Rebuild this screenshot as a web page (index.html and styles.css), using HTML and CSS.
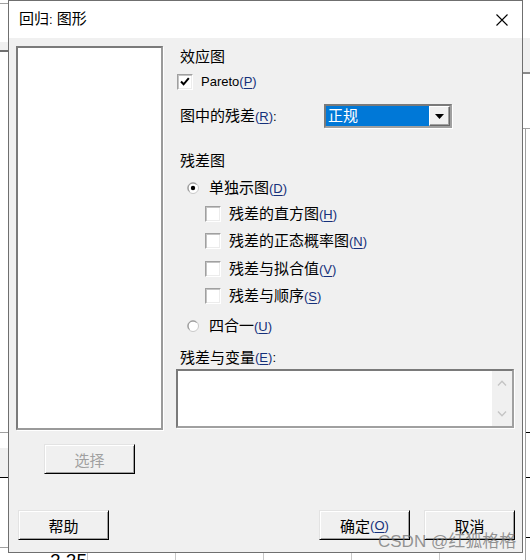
FILE: index.html
```html
<!DOCTYPE html>
<html lang="zh-CN">
<head>
<meta charset="utf-8">
<title>回归: 图形</title>
<link rel="stylesheet" href="styles.css">
</head>
<body>
<div class="backdrop">
  <div class="bl bl-1"></div>
  <div class="bl bl-band1"></div>
  <div class="bl bl-2"></div>
  <div class="bl bl-3"></div>
  <div class="bl bl-band2"></div>
  <div class="bl bl-4"></div>
  <div class="bl bl-5"></div>
  <div class="br br-band1"></div>
  <div class="br br-1"></div>
  <div class="br br-2"></div>
  <div class="br br-v"></div>
  <div class="br br-3"></div>
  <div class="br br-4"></div>
  <div class="br br-5"></div>
  <div class="bv bv-1"></div>
  <div class="bv bv-2"></div>
  <div class="bv bv-3"></div>
  <div class="bv bv-4"></div>
  <div class="bv bv-5"></div>
  <div class="cellnum">2.25</div>
</div>

<div class="dialog">
  <div class="titlebar">
    <span class="title">回归<span class="lat">:</span> 图形</span>
    <svg class="close" width="12" height="12" viewBox="0 0 12 12"><path d="M0.5 0.5 L11.5 11.5 M11.5 0.5 L0.5 11.5" stroke="#000" stroke-width="1.1" fill="none"/></svg>
  </div>
  <div class="client">
    <div class="main">
      <div class="leftcol">
        <div class="listbox"></div>
        <button class="btn btn-select" disabled>选择</button>
      </div>
      <div class="rightcol">
        <div class="row r-effect">效应图</div>
        <div class="row r-pareto">
          <span class="cb"><svg width="14" height="14" viewBox="0 0 14 14"><path d="M3 6.5 L5.6 9.3 L10.8 3.2" stroke="#000" stroke-width="2" fill="none"/></svg></span>
          <span class="lat">Pareto<span class="key">(<u>P</u>)</span></span>
        </div>
        <div class="row r-resid">
          <span class="resid-label">图中的残差<span class="key">(<u>R</u>)</span><span class="lat">:</span></span>
          <div class="combo">
            <div class="combo-val">正规</div>
            <div class="combo-btn"><svg width="9" height="5" viewBox="0 0 9 5"><path d="M0 0 H9 L4.5 5 Z" fill="#000"/></svg></div>
          </div>
        </div>
        <div class="row r-plots">残差图</div>
        <div class="row opt r-single">
          <span class="radio"><svg width="12" height="12" viewBox="0 0 12 12"><circle cx="6" cy="6" r="5.5" fill="#fff" stroke="#c8c8c8"/><path d="M2.5 9.5 A4.9 4.9 0 0 1 9.5 2.5" fill="none" stroke="#8a8a8a"/><circle cx="6" cy="6" r="2.2" fill="#000"/></svg></span>
          <span>单独示图<span class="key">(<u>D</u>)</span></span>
        </div>
        <div class="row sub r-s1"><span class="cb"></span><span>残差的直方图<span class="key">(<u>H</u>)</span></span></div>
        <div class="row sub r-s2"><span class="cb"></span><span>残差的正态概率图<span class="key">(<u>N</u>)</span></span></div>
        <div class="row sub r-s3"><span class="cb"></span><span>残差与拟合值<span class="key">(<u>V</u>)</span></span></div>
        <div class="row sub r-s4"><span class="cb"></span><span>残差与顺序<span class="key">(<u>S</u>)</span></span></div>
        <div class="row opt r-four">
          <span class="radio"><svg width="12" height="12" viewBox="0 0 12 12"><circle cx="6" cy="6" r="5.5" fill="#fff" stroke="#c8c8c8"/><path d="M2.5 9.5 A4.9 4.9 0 0 1 9.5 2.5" fill="none" stroke="#8a8a8a"/></svg></span>
          <span>四合一<span class="key">(<u>U</u>)</span></span>
        </div>
        <div class="row r-vars">残差与变量<span class="key">(<u>E</u>)</span><span class="lat">:</span></div>
        <div class="varbox">
          <div class="vscroll">
            <svg width="10" height="6" viewBox="0 0 10 6"><path d="M1 5.5 L5 1.2 L9 5.5" stroke="#c4c4c4" stroke-width="1.3" fill="none"/></svg>
            <svg width="10" height="6" viewBox="0 0 10 6"><path d="M1 0.5 L5 4.8 L9 0.5" stroke="#c4c4c4" stroke-width="1.3" fill="none"/></svg>
          </div>
        </div>
      </div>
    </div>
    <div class="footer">
      <button class="btn">帮助</button>
      <span class="spacer"></span>
      <button class="btn">确定<span class="key">(<u>O</u>)</span></button>
      <button class="btn">取消</button>
    </div>
  </div>
</div>

<div class="watermark">CSDN @红狐格格</div>
</body>
</html>
```

FILE: styles.css
```css
* { box-sizing: border-box; }
html, body { margin: 0; padding: 0; }
body {
  width: 530px;
  height: 560px;
  overflow: hidden;
  position: relative;
  background: #fff;
  color: #000;
  font-family: "Liberation Sans", "Noto Sans CJK SC", sans-serif;
  font-size: 15px;
}

/* ---------- background application (behind the dialog) ---------- */
.backdrop { position: absolute; inset: 0; }
.bl, .br, .bv { position: absolute; }
.bl { left: 0; width: 8px; }
.bl-1 { top: 3px; height: 1px; background: #a0a0a0; }
.bl-band1 { top: 42px; height: 9px; background: #f0f0f0; }
.bl-2 { top: 50px; height: 2px; background: #707070; }
.bl-3 { top: 432px; height: 1px; background: #a0a0a0; }
.bl-band2 { top: 448px; height: 29px; background: #f0f0f0; }
.bl-4 { top: 477px; height: 1px; background: #000; }
.bl-5 { top: 547px; height: 1px; background: #a0a0a0; }
.br { left: 523px; width: 7px; }
.br-band1 { top: 38px; height: 34px; background: #f0f0f0; }
.br-1 { top: 72px; height: 2px; background: #8a8a8a; }
.br-2 { top: 128px; height: 1px; background: #a0a0a0; }
.br-v { left: 525px; width: 1px; top: 129px; height: 431px; background: #a0a0a0; }
.br-3 { left: 526px; width: 4px; top: 432px; height: 1px; background: #000; }
.br-4 { left: 526px; width: 4px; top: 477px; height: 1px; background: #000; }
.br-5 { left: 526px; width: 4px; top: 537px; height: 1px; background: #000; }
.bv { top: 553px; height: 7px; width: 1px; background: #c8c8c8; }
.bv-1 { left: 87px; }
.bv-2 { left: 175px; }
.bv-3 { left: 263px; }
.bv-4 { left: 351px; }
.bv-5 { left: 439px; }
.cellnum {
  position: absolute;
  left: 50px;
  top: 550px;
  font-size: 19px;
  line-height: 22px;
  color: #000;
}

/* ---------- dialog window ---------- */
.dialog {
  position: absolute;
  left: 8px;
  top: 0;
  width: 515px;
  height: 553px;
  border: 1px solid #6f6f6f;
  background: #f0f0f0;
  display: flex;
  flex-direction: column;
}
.titlebar {
  height: 37px;
  background: #fff;
  display: flex;
  align-items: center;
  justify-content: space-between;
  padding: 0 14px 0 10px;
}
.title { font-size: 15px; line-height: 20px; }
.close { display: block; }

.client { flex: 1; display: flex; flex-direction: column; }

.main {
  display: grid;
  grid-template-columns: 147px 338px;
  column-gap: 13px;
  padding: 8px 0 0 7px;
  align-items: start;
}
.leftcol { display: flex; flex-direction: column; }
.listbox {
  width: 147px;
  height: 384px;
  background: #fff;
  border: 2px solid;
  border-color: #7a7a7a #9a9a9a #9a9a9a #7a7a7a;
  box-shadow: 1px 1px 0 #fff;
}

/* ---------- buttons ---------- */
.btn {
  width: 91px;
  height: 30px;
  padding: 0;
  margin: 0;
  font: inherit;
  font-size: 15px;
  color: #000;
  background: #f0f0f0;
  border: 1px solid;
  border-color: #e3e3e3 #000 #000 #e3e3e3;
  box-shadow: inset 1px 1px 0 #fff, inset -1px -1px 0 #a0a0a0;
  display: flex;
  align-items: center;
  justify-content: center;
}
.btn:disabled { color: #a0a0a0; }
.btn-select { margin: 14px 0 0 28px; }

/* ---------- right column ---------- */
.rightcol { display: flex; flex-direction: column; }
.row {
  height: 22px;
  display: flex;
  align-items: center;
  line-height: 22px;
  white-space: nowrap;
}
.r-effect, .r-plots, .r-vars { padding-left: 4px; }
.r-pareto { margin-top: 3px; padding-left: 1px; gap: 8px; }
.r-resid { margin-top: 11px; height: 24px; padding-left: 4px; }
.resid-label { width: 144px; }
.r-plots { margin-top: 22px; }
.opt { padding-left: 11px; gap: 10px; }
.r-single { margin-top: 5px; }
.sub { padding-left: 29px; gap: 8px; }
.r-s1 { margin-top: 4px; }
.r-s2 { margin-top: 5px; }
.r-s3 { margin-top: 6px; }
.r-s4 { margin-top: 5px; }
.r-four { margin-top: 8px; }
.r-vars { margin-top: 10px; }

.lat { font-size: 13px; }
.key { font-size: 13px; color: #15307a; }
.key u { text-decoration-thickness: 1px; text-underline-offset: 2px; }

.cb {
  width: 16px;
  height: 16px;
  flex: none;
  background: #fff;
  border: 1px solid;
  border-color: #a0a0a0 #fff #fff #a0a0a0;
  box-shadow: inset 1px 1px 0 #c4c4c4, inset -1px -1px 0 #ececec;
  display: flex;
  align-items: center;
  justify-content: center;
}
.cb svg { display: block; }
.radio { width: 12px; height: 12px; flex: none; display: block; }
.radio svg { display: block; }

/* combo box */
.combo {
  width: 128px;
  height: 24px;
  display: flex;
  border: 2px solid;
  border-color: #7a7a7a #a0a0a0 #a0a0a0 #7a7a7a;
  box-shadow: 1px 1px 0 #fff;
  background: #fff;
}
.combo-val {
  width: 103px;
  background: #0078d7;
  color: #fff;
  line-height: 20px;
  padding-left: 2px;
}
.combo-btn {
  flex: 1;
  background: #f0f0f0;
  border: 1px solid;
  border-color: #fff #696969 #696969 #fff;
  box-shadow: inset -1px -1px 0 #a0a0a0;
  display: flex;
  align-items: center;
  justify-content: center;
}
.combo-btn svg { display: block; }

/* variables box */
.varbox {
  height: 59px;
  width: 338px;
  background: #fff;
  border: 2px solid;
  border-color: #7a7a7a #a0a0a0 #a0a0a0 #7a7a7a;
  box-shadow: 1px 1px 0 #fff;
  display: flex;
  justify-content: flex-end;
}
.vscroll {
  width: 20px;
  background: #f0f0f0;
  display: flex;
  flex-direction: column;
  justify-content: space-between;
  align-items: center;
  padding: 9px 0 9px;
}
.vscroll svg { display: block; }

/* ---------- footer ---------- */
.footer {
  display: flex;
  margin-top: 36px;
  padding: 0 7px 0 9px;
  gap: 14px;
}
.spacer { flex: 1; }

/* ---------- watermark overlay ---------- */
.watermark {
  position: absolute;
  left: 378px;
  top: 531px;
  font-size: 17px;
  line-height: 21px;
  color: rgba(110, 110, 110, 0.72);
  white-space: nowrap;
}
```
